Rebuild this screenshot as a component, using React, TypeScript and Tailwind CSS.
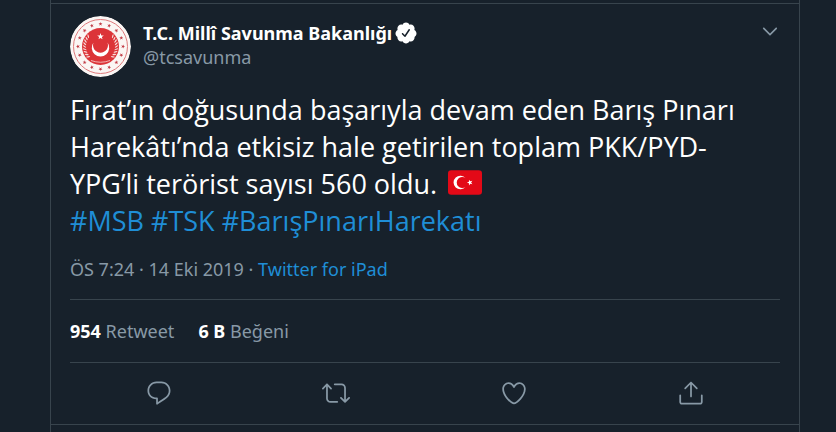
import React from 'react'

interface IconProps {
  paths: string[];
  className?: string;
}

interface ActionProps {
  label: string;
  paths: string[];
}

const replyPaths = ['M14.046 2.242l-4.148-.01h-.002c-4.374 0-7.8 3.427-7.8 7.802 0 4.098 3.186 7.206 7.465 7.37v3.828c0 .108.044.286.12.403.142.225.384.347.632.347.138 0 .277-.038.402-.118.264-.168 6.473-4.14 8.088-5.506 1.902-1.61 3.04-3.97 3.043-6.312v-.017c-.006-4.367-3.43-7.787-7.8-7.788zm3.787 12.972c-1.134.96-4.862 3.405-6.772 4.643V16.67c0-.414-.335-.75-.75-.75h-.396c-3.66 0-6.318-2.476-6.318-5.886 0-3.534 2.768-6.302 6.3-6.302l4.147.01h.002c3.532 0 6.3 2.766 6.302 6.296-.003 1.91-.942 3.844-2.514 5.176z']
const retweetPaths = ['M23.77 15.67c-.292-.293-.767-.293-1.06 0l-2.22 2.22V7.65c0-2.068-1.683-3.75-3.75-3.75h-5.85c-.414 0-.75.336-.75.75s.336.75.75.75h5.85c1.24 0 2.25 1.01 2.25 2.25v10.24l-2.22-2.22c-.293-.293-.768-.293-1.06 0s-.294.768 0 1.06l3.5 3.5c.145.147.337.22.53.22s.383-.072.53-.22l3.5-3.5c.294-.292.294-.767 0-1.06zm-10.66 3.28H7.26c-1.24 0-2.25-1.01-2.25-2.25V6.46l2.22 2.22c.148.147.34.22.532.22s.384-.073.53-.22c.293-.293.293-.768 0-1.06l-3.5-3.5c-.293-.294-.768-.294-1.06 0l-3.5 3.5c-.294.292-.294.767 0 1.06s.767.293 1.06 0l2.22-2.22V16.7c0 2.068 1.683 3.75 3.75 3.75h5.85c.414 0 .75-.336.75-.75s-.337-.75-.75-.75z']
const heartPaths = ['M12 21.638h-.014C9.403 21.59 1.95 14.856 1.95 8.478c0-3.064 2.525-5.754 5.403-5.754 2.29 0 3.83 1.58 4.646 2.73.814-1.148 2.354-2.73 4.645-2.73 2.88 0 5.404 2.69 5.404 5.755 0 6.376-7.454 13.11-10.037 13.157H12zM7.354 4.225c-2.08 0-3.903 1.988-3.903 4.255 0 5.74 7.034 11.596 8.55 11.658 1.518-.062 8.55-5.917 8.55-11.658 0-2.267-1.823-4.255-3.903-4.255-2.528 0-3.94 2.936-3.952 2.965-.23.562-1.156.562-1.387 0-.014-.03-1.425-2.965-3.954-2.965z']
const sharePaths = [
  'M17.53 7.47l-5-5c-.293-.293-.768-.293-1.06 0l-5 5c-.294.293-.294.768 0 1.06s.767.294 1.06 0l3.72-3.72V15c0 .414.336.75.75.75s.75-.336.75-.75V4.81l3.72 3.72c.146.147.338.22.53.22s.384-.072.53-.22c.293-.293.293-.767 0-1.06z',
  'M19.708 21.944H4.292C3.028 21.944 2 20.916 2 19.652V14c0-.414.336-.75.75-.75s.75.336.75.75v5.652c0 .437.355.792.792.792h15.416c.437 0 .792-.355.792-.792V14c0-.414.336-.75.75-.75s.75.336.75.75v5.652c0 1.264-1.028 2.292-2.292 2.292z',
]
const chevronPaths = ['M20.207 8.147c-.39-.39-1.023-.39-1.414 0L12 14.94 5.207 8.147c-.39-.39-1.023-.39-1.414 0-.39.39-.39 1.023 0 1.414l7.5 7.5c.195.196.45.294.707.294s.512-.098.707-.293l7.5-7.5c.39-.39.39-1.022 0-1.413z']
const verifiedPaths = ['M22.5 12.5c0-1.58-.875-2.95-2.148-3.6.154-.435.238-.905.238-1.4 0-2.21-1.71-3.998-3.818-3.998-.47 0-.92.084-1.336.25C14.818 2.415 13.51 1.5 12 1.5s-2.816.917-3.437 2.25c-.415-.165-.866-.25-1.336-.25-2.11 0-3.818 1.79-3.818 4 0 .494.083.964.237 1.4-1.272.65-2.147 2.018-2.147 3.6 0 1.495.782 2.798 1.942 3.486-.02.17-.032.34-.032.514 0 2.21 1.708 4 3.818 4 .47 0 .92-.086 1.335-.25.62 1.334 1.926 2.25 3.437 2.25 1.512 0 2.818-.916 3.437-2.25.415.163.865.248 1.336.248 2.11 0 3.818-1.79 3.818-4 0-.174-.012-.344-.033-.513 1.158-.687 1.943-1.99 1.943-3.484zm-6.616-3.334l-4.334 6.5c-.145.217-.382.334-.625.334-.143 0-.288-.04-.416-.126l-.115-.094-2.415-2.415c-.293-.293-.293-.768 0-1.06s.768-.294 1.06 0l1.77 1.767 3.825-5.74c.23-.345.696-.436 1.04-.207.346.23.44.696.21 1.04z']

const starPoints = '0,-10 2.3,-3.2 9.5,-3.1 3.8,1.2 5.9,8.1 0,4 -5.9,8.1 -3.8,1.2 -9.5,-3.1 -2.3,-3.2'

const actions: ActionProps[] = [
  { label: 'Yanıtla', paths: replyPaths },
  { label: 'Retweetle', paths: retweetPaths },
  { label: 'Beğen', paths: heartPaths },
  { label: 'Paylaş', paths: sharePaths },
]

const hashtags = ['#MSB', '#TSK', '#BarışPınarıHarekatı']

const Icon: React.FC<IconProps> = ({ paths, className }) => (
  <svg viewBox="0 0 24 24" className={className} fill="currentColor" aria-hidden="true">
    {paths.map(d => <path d={d} key={d} />)}
  </svg>
)

const Emblem = () => {
  const ringStars = Array.from({ length: 16 }, (_, i) => i * 22.5)
  const leaves = [-40, -30, -20, -10, 0, 10, 20, 30, 40]

  return (
    <svg viewBox="0 0 122 122" className="size-[61px] shrink-0 rounded-full" aria-hidden="true">
      <circle cx="61" cy="61" r="61" fill="#fbf6f4" />
      <circle cx="61" cy="61" r="54" fill="none" stroke="#dd7a7c" strokeWidth="2" />
      <circle cx="61" cy="61" r="37" fill="#dc3438" />
      {ringStars.map(angle => (
        <polygon
          key={angle}
          points={starPoints}
          fill="#c03a44"
          transform={`rotate(${angle} 61 61) translate(61 16) scale(0.42)`}
        />
      ))}
      {leaves.map(angle => (
        <g key={angle} fill="#f8dcda">
          <ellipse cx="93" cy="61" rx="4" ry="1.3" transform={`rotate(${angle} 61 61) rotate(-35 93 61)`} />
          <ellipse cx="29" cy="61" rx="4" ry="1.3" transform={`rotate(${-angle} 61 61) rotate(35 29 61)`} />
        </g>
      ))}
      <path d="M42 89q19 7 38 0" fill="none" stroke="#f8dcda" strokeWidth="1.5" />
      <path d="M47 53a17.500 17.500 0 1 0 28 0a15 15 0 1 1 -28 0z" fill="#fff" />
      <polygon points={starPoints} fill="#fff" transform="translate(61 41) scale(0.7)" />
    </svg>
  )
}

const TurkishFlag = () => (
  <svg viewBox="0 0 36 26" className="ml-1 inline-block h-[25px] w-[34px] align-[-1px]" role="img" aria-label="Türkiye">
    <rect width="36" height="26" rx="3.5" fill="#e30917" />
    <path d="M18.700 17.500a7.200 7.200 0 1 1 0-9a5.800 5.800 0 1 0 0 9z" fill="#fff" />
    <polygon points={starPoints} fill="#fff" transform="translate(23.200 13) rotate(-18) scale(0.320)" />
  </svg>
)

const ActionButton: React.FC<ActionProps> = ({ label, paths }) => (
  <button type="button" aria-label={label} className="flex flex-1 items-center justify-center">
    <Icon paths={paths} className="size-7" />
  </button>
)

const Tweet = () => (
  <article className="border-y border-[#38444d] px-[19px] pt-3">
    <div className="flex">
      <Emblem />
      <div className="ml-3 grow pt-[5px] text-lg leading-6">
        <div className="flex items-center">
          <h2 className="font-bold text-white">T.C. Millî Savunma Bakanlığı</h2>
          <Icon paths={verifiedPaths} className="ml-[2px] size-6 text-white" />
        </div>
        <a href="#tcsavunma">@tcsavunma</a>
      </div>
      <button type="button" aria-label="Diğer" className="mt-[5px] size-5">
        <Icon paths={chevronPaths} className="size-5" />
      </button>
    </div>
    <p className="mt-[14px] font-['Open_Sans',sans-serif] text-[27px] leading-[37px] text-white">
      Fırat’ın doğusunda başarıyla devam eden Barış Pınarı<br />
      Harekâtı’nda etkisiz hale getirilen toplam PKK/PYD-<br />
      YPG’li terörist sayısı 560 oldu. <TurkishFlag /><br />
      {hashtags.map(tag => (
        <React.Fragment key={tag}>
          <a href={tag} className="text-[#1f8ed6]">{tag}</a>{' '}
        </React.Fragment>
      ))}
    </p>
    <div className="mt-[18px] pb-[18px] text-lg leading-6">
      ÖS 7:24 · 14 Eki 2019 · <a href="#ipad" className="text-[#1f8ed6]">Twitter for iPad</a>
    </div>
    <div className="flex gap-6 border-y border-[#38444d] py-[19px] text-lg leading-6">
      <span><b className="text-white">954</b> Retweet</span>
      <span><b className="text-white">6 B</b> Beğeni</span>
    </div>
    <div className="flex pt-4 pb-[17px]">
      {actions.map(action => <ActionButton {...action} key={action.label} />)}
    </div>
  </article>
)

const App = () => (
  <div className="min-h-screen bg-[#17212b] pl-[50px] pr-9 font-['Noto_Sans',sans-serif] text-[#8899a6]">
    <main className="min-h-screen border-x border-[#38444d] pt-[3px]">
      <Tweet />
    </main>
  </div>
)

export default App
